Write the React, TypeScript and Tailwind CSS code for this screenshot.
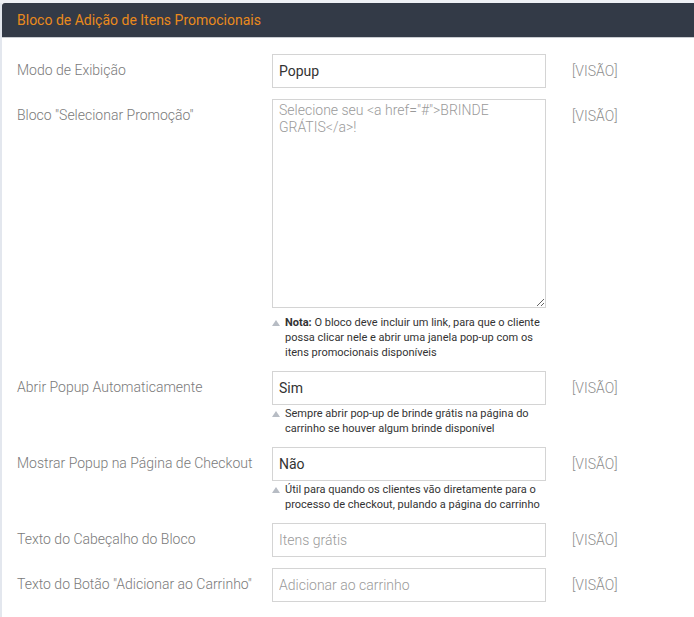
import type { ReactNode } from "react";

function Note({ children }: { children: ReactNode }) {
  return (
    <div className="flex items-start gap-[5px] mt-[1px] text-[11px] leading-[15px] text-[#333]">
      <span className="mt-[5px] shrink-0 w-0 h-0 border-l-[4px] border-r-[4px] border-b-[6px] border-l-transparent border-r-transparent border-b-[#b7bcc4]" />
      <p>{children}</p>
    </div>
  );
}

function Row({
  label,
  children,
  note,
}: {
  label: string;
  children: ReactNode;
  note?: ReactNode;
}) {
  return (
    <div className="flex items-start">
      <div className="w-[270px] shrink-0 pl-[15px] pr-[4px] pt-[7px] text-[14px] leading-[18px] font-light text-[#7a7a7a]">{label}</div>
      <div className="w-[274px] shrink-0">
        {children}
        {note && <Note>{note}</Note>}
      </div>
      <div className="pl-[26px] pt-[8px] text-[14px] leading-[18px] font-light text-[#8e8e8e]">[VISÃO]</div>
    </div>
  );
}

function TextInput({ value, placeholder }: { value?: string; placeholder?: string }) {
  return (
    <input
      readOnly
      value={value}
      placeholder={placeholder}
      className="block w-[274px] h-[34px] px-[6px] border border-[#d4d4d4] bg-white text-[14px] text-[#333] placeholder:text-[#9a9a9a] placeholder:font-light outline-none"
    />
  );
}

export default function App() {
  return (
    <div className="min-h-[617px] bg-white font-['Roboto',sans-serif]">
      <div className="h-[3px] bg-[#eef0f5]" />
      <div className="border-l-[2px] border-[#e3e7ee] min-h-[614px]">
        <div className="h-[35px] bg-[#333a47] rounded-tl-[3px] pl-[15px] flex items-center text-[14px] text-[#ea8a1c] border-b border-[#c9ccd1]">
          Bloco de Adição de Itens Promocionais
        </div>
        <div className="flex flex-col gap-[11px] pt-[16px] pb-[14px]">
          <Row label="Modo de Exibição">
            <TextInput value="Popup" />
          </Row>
          <Row
            label={'Bloco "Selecionar Promoção"'}
            note={
              <>
                <b>Nota:</b> O bloco deve incluir um link, para que o cliente possa clicar nele e abrir uma janela pop-up com os itens promocionais disponíveis
              </>
            }
          >
            <textarea
              readOnly
              placeholder={'Selecione seu <a href="#">BRINDE GRÁTIS</a>!'}
              className="block w-[274px] h-[209px] mb-[7px] px-[6px] py-[2px] border border-[#d4d4d4] bg-white text-[14px] leading-[17px] text-[#333] placeholder:text-[#9a9a9a] placeholder:font-light outline-none"
            />
          </Row>
          <Row
            label="Abrir Popup Automaticamente"
            note="Sempre abrir pop-up de brinde grátis na página do carrinho se houver algum brinde disponível"
          >
            <TextInput value="Sim" />
          </Row>
          <Row
            label="Mostrar Popup na Página de Checkout"
            note="Útil para quando os clientes vão diretamente para o processo de checkout, pulando a página do carrinho"
          >
            <TextInput value="Não" />
          </Row>
          <Row label="Texto do Cabeçalho do Bloco">
            <TextInput placeholder="Itens grátis" />
          </Row>
          <Row label={'Texto do Botão "Adicionar ao Carrinho"'}>
            <TextInput placeholder="Adicionar ao carrinho" />
          </Row>
        </div>
      </div>
    </div>
  );
}
